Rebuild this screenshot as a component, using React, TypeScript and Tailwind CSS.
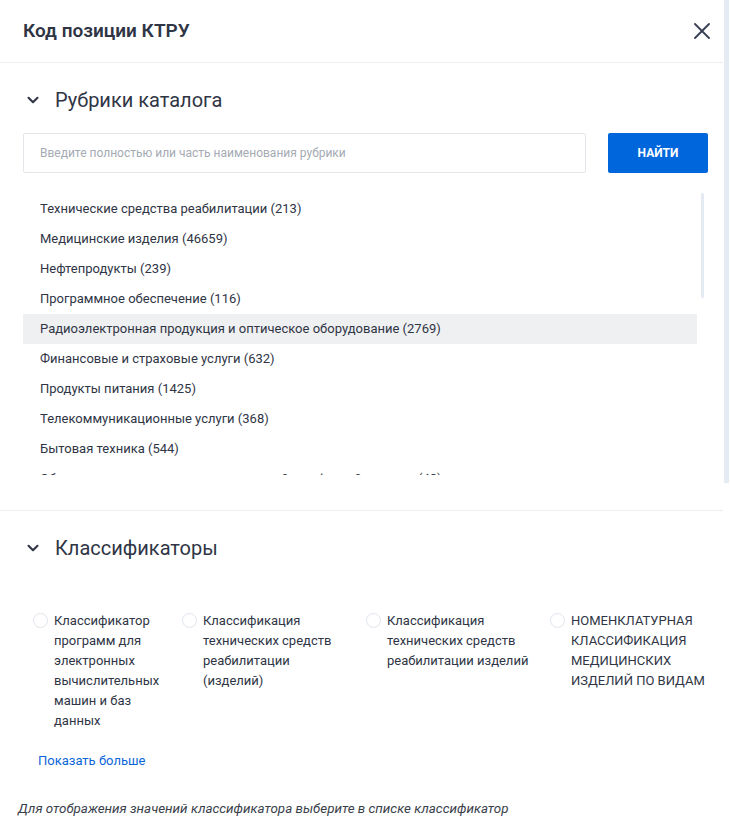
import { ChevronDown, X } from "lucide-react";

const rubrics = [
  "Технические средства реабилитации (213)",
  "Медицинские изделия (46659)",
  "Нефтепродукты (239)",
  "Программное обеспечение (116)",
  "Радиоэлектронная продукция и оптическое оборудование (2769)",
  "Финансовые и страховые услуги (632)",
  "Продукты питания (1425)",
  "Телекоммуникационные услуги (368)",
  "Бытовая техника (544)",
  "Оборудование и материалы для газовой и нефтяной отрасли (48)",
];

const classifiers = [
  { label: "Классификатор программ для электронных вычислительных машин и баз данных", item: "w-[149px]", text: "w-[118px]" },
  { label: "Классификация технических средств реабилитации (изделий)", item: "w-[184px]", text: "w-[134px]" },
  { label: "Классификация технических средств реабилитации изделий", item: "w-[184px]", text: "w-[150px]" },
  { label: "НОМЕНКЛАТУРНАЯ КЛАССИФИКАЦИЯ МЕДИЦИНСКИХ ИЗДЕЛИЙ ПО ВИДАМ", item: "flex-1", text: "w-[140px]" },
];

function SectionTitle({ title }: { title: string }) {
  return (
    <div className="flex items-center gap-[13px] pl-[24px]">
      <ChevronDown className="h-[18px] w-[18px] text-[#2f3545]" strokeWidth={2.8} />
      <span className="text-[20px] leading-[24px] text-[#2f3545]">{title}</span>
    </div>
  );
}

export default function App() {
  return (
    <div className="flex h-[840px] w-[730px] bg-white font-['Roboto',sans-serif] text-[#2f3545]">
      <div className="flex w-[723px] flex-col">
        {/* header */}
        <div className="flex h-[63px] items-center justify-between border-b border-[#eceef1] pl-[23px] pr-[7px]">
          <h1 className="text-[19px] font-semibold">Код позиции КТРУ</h1>
          <X className="h-[28px] w-[28px] text-[#3a4256]" strokeWidth={1.6} />
        </div>

        {/* rubrics */}
        <div className="relative border-b border-[#eceef1] pb-[35px] pt-[25px]">
          <SectionTitle title="Рубрики каталога" />
          <div className="mt-[21px] flex gap-[22px] pl-[23px] pr-[15px]">
            <input
              placeholder="Введите полностью или часть наименования рубрики"
              className="h-[40px] w-[563px] rounded-[2px] border border-[#e3e6ea] px-[16px] text-[12px] placeholder:text-[#a5aab3] outline-none"
            />
            <button className="h-[40px] flex-1 rounded-[2px] bg-[#0066dc] text-[12px] font-bold text-white">
              НАЙТИ
            </button>
          </div>
          <div className="mt-[21px] h-[281px] overflow-hidden pl-[23px] pr-[26px]">
            {rubrics.map((r, i) => (
              <div
                key={r}
                className={
                  "flex h-[30px] items-center pl-[17px] text-[13px] " + (i === 4 ? "bg-[#eff0f2]" : "")
                }
              >
                {r}
              </div>
            ))}
          </div>
          <div className="absolute left-[701px] top-[130px] h-[105px] w-[3px] rounded-full bg-[#e3eaf2]" />
        </div>

        {/* classifiers */}
        <div className="pt-[25px]">
          <SectionTitle title="Классификаторы" />
          <div className="mt-[51px] flex pl-[33px] pr-[10px]">
            {classifiers.map((c) => (
              <div key={c.label} className={"flex items-start gap-[6px] " + c.item}>
                <span className="mt-[2px] h-[15px] w-[15px] shrink-0 rounded-full border border-[#dfe4ea]" />
                <span className={"text-[13px] leading-[20px] " + c.text}>{c.label}</span>
              </div>
            ))}
          </div>
          <div className="mt-[20px] pl-[38px] text-[13px] leading-[20px] text-[#0a66d8]">Показать больше</div>
          <div className="mt-[28px] pl-[18px] text-[13.4px] leading-[20px] italic text-[#3a3f4b]">
            Для отображения значений классификатора выберите в списке классификатор
          </div>
        </div>
      </div>
      <div className="flex-1 pl-[1px]">
        <div className="h-[483px] w-[5px] bg-[#e4ebf3]" />
      </div>
    </div>
  );
}
